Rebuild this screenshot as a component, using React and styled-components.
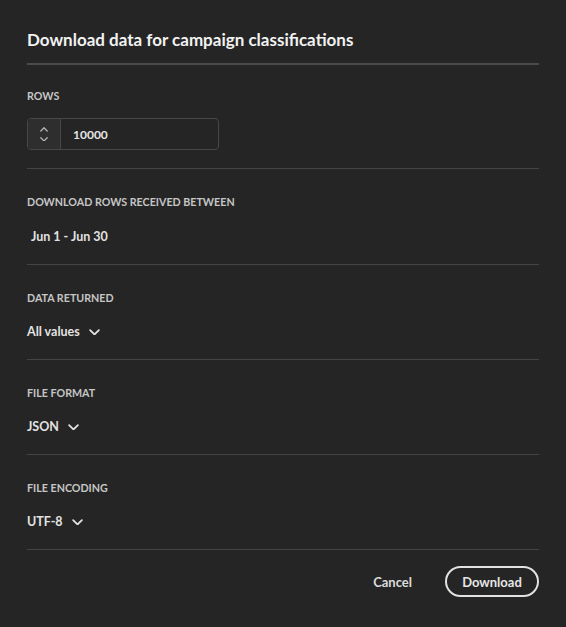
import styled, { createGlobalStyle } from 'styled-components';

const GlobalStyle = createGlobalStyle`
    html, body {
        margin: 0;
        background: #252525;
    }
    body {
        font-family: 'Lato', 'Open Sans', sans-serif;
        color: #e6e6e6;
    }
`;

const Dialog = styled.div`
    width: 566px;
    height: 627px;
    box-sizing: border-box;
    padding: 28px 27px 0;
    background: #252525;
`;

const Title = styled.h2`
    margin: 0;
    font-size: 17px;
    line-height: 24px;
    font-weight: 700;
    color: #f2f2f2;
`;

const TitleRule = styled.div`
    height: 2px;
    margin-top: 11px;
    background: #4b4b4b;
`;

const Section = styled.section`
    padding: ${p => (p.$first ? '24px 0 18px' : '26px 0 18px')};
    border-bottom: 1px solid #444444;
`;

const Label = styled.div`
    font-size: 10.7px;
    line-height: 14px;
    font-weight: 700;
    text-transform: uppercase;
    color: #c6c6c6;
    margin-bottom: ${p => (p.$tight ? '15px' : '18px')};
`;

const Value = styled.div`
    font-size: 12.5px;
    line-height: 19px;
    font-weight: 700;
    color: #e2e2e2;
    padding-left: ${p => p.$indent || 0}px;
`;

const NumberField = styled.div`
    display: flex;
    width: 192px;
    height: 32px;
    box-sizing: border-box;
    border: 1px solid #474747;
    border-radius: 4px;
    overflow: hidden;
`;

const Stepper = styled.div`
    width: 32px;
    display: flex;
    flex-direction: column;
    align-items: center;
    justify-content: center;
    gap: 5px;
    background: #2e2e2e;
    border-right: 1px solid #474747;
    color: #b4b4b4;
`;

const NumberInput = styled.div`
    flex: 1;
    display: flex;
    align-items: center;
    padding-left: 12px;
    font-size: 12px;
    font-weight: 700;
    color: #e6e6e6;
`;

const Picker = styled.div`
    display: flex;
    width: fit-content;
    height: 18px;
    align-items: center;
    gap: 9px;
    font-size: 12.5px;
    line-height: 18px;
    font-weight: 700;
    color: #e2e2e2;
`;

const Footer = styled.div`
    display: flex;
    justify-content: flex-end;
    align-items: center;
    gap: 19px;
    padding-top: 16px;
`;

const TextButton = styled.button`
    background: none;
    border: none;
    padding: 0 14px;
    height: 31px;
    font-family: inherit;
    font-size: 13px;
    font-weight: 700;
    color: #dcdcdc;
`;

const OutlineButton = styled.button`
    width: 94px;
    height: 31px;
    box-sizing: border-box;
    background: transparent;
    border: 2px solid #e2e2e2;
    border-radius: 16px;
    font-family: inherit;
    font-size: 13px;
    font-weight: 700;
    color: #e6e6e6;
`;

const Chevron = ({ up, size = 11 }) => (
    <svg width={size} height={size * 0.6} viewBox="0 0 10 6" fill="none" style={{ display: 'block' }}>
        <path
            d={up ? 'M1 5 L5 1 L9 5' : 'M1 1 L5 5 L9 1'}
            stroke="currentColor"
            strokeWidth="1.6"
            strokeLinecap="round"
            strokeLinejoin="round"
        />
    </svg>
);

const Select = ({ value }) => (
    <Picker>
        {value}
        <Chevron />
    </Picker>
);

const App = () => (
    <>
        <GlobalStyle />
        <Dialog>
            <Title>Download data for campaign classifications</Title>
            <TitleRule />

            <Section $first>
                <Label $tight>Rows</Label>
                <NumberField>
                    <Stepper>
                        <Chevron up size={8} />
                        <Chevron size={8} />
                    </Stepper>
                    <NumberInput>10000</NumberInput>
                </NumberField>
            </Section>

            <Section>
                <Label>Download rows received between</Label>
                <Value $indent={4}>Jun 1 - Jun 30</Value>
            </Section>

            <Section>
                <Label>Data returned</Label>
                <Select value="All values" />
            </Section>

            <Section>
                <Label>File format</Label>
                <Select value="JSON" />
            </Section>

            <Section>
                <Label>File encoding</Label>
                <Select value="UTF-8" />
            </Section>

            <Footer>
                <TextButton>Cancel</TextButton>
                <OutlineButton>Download</OutlineButton>
            </Footer>
        </Dialog>
    </>
);

export default App;
